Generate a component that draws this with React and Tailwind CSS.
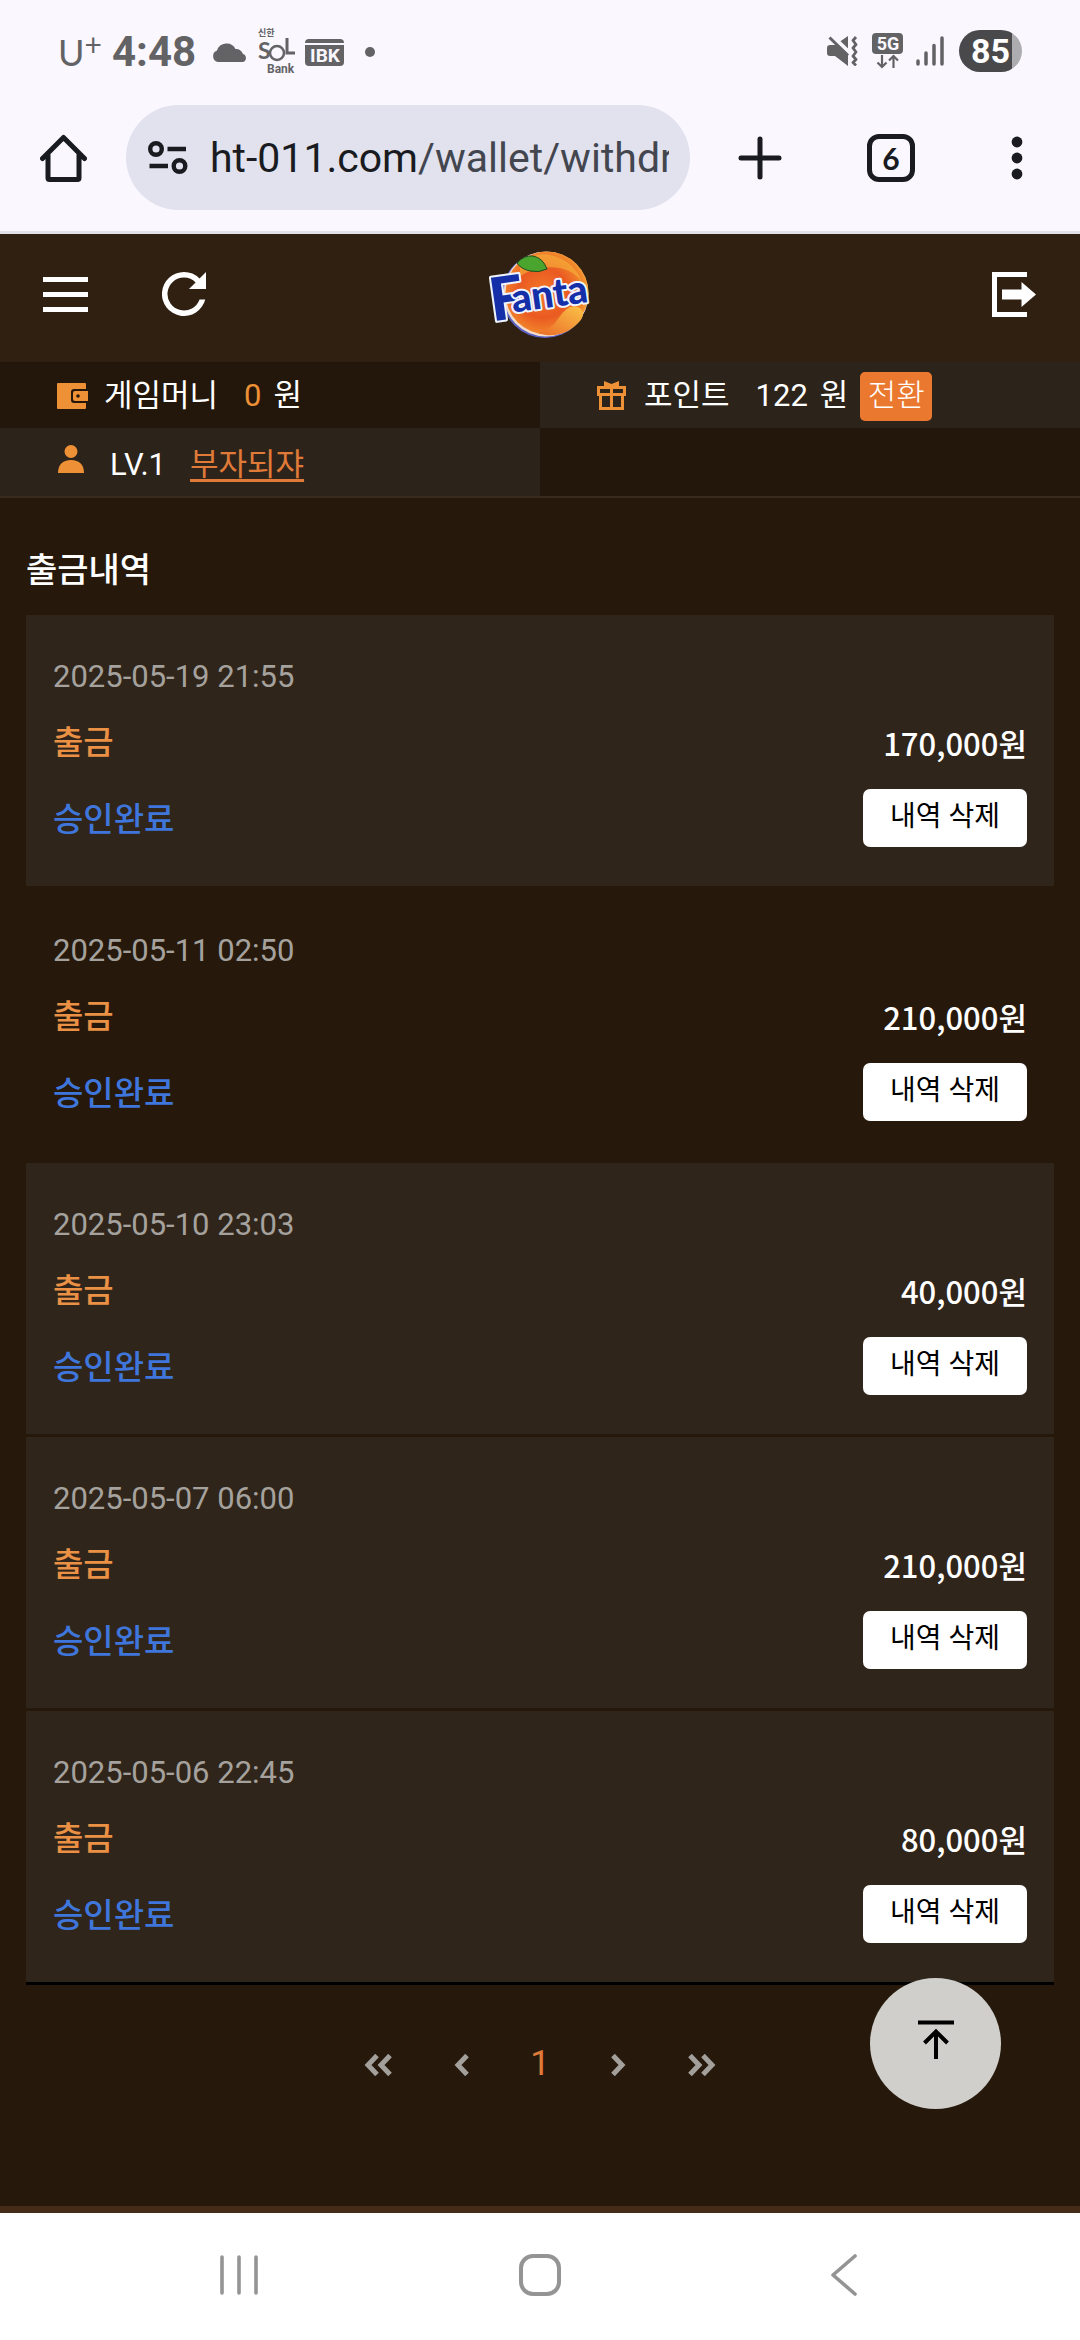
import { useRef, useState } from 'react'
import clsx from 'clsx'

const INITIAL_WITHDRAWALS = [
  { id: 1, date: '2025-05-19 21:55', amount: 170000 },
  { id: 2, date: '2025-05-11 02:50', amount: 210000 },
  { id: 3, date: '2025-05-10 23:03', amount: 40000 },
  { id: 4, date: '2025-05-07 06:00', amount: 210000 },
  { id: 5, date: '2025-05-06 22:45', amount: 80000 },
]

// 상태 표시줄
function StatusBar() {
  return (
    <div className="flex h-[105px] items-start justify-between px-[58px] pt-[30px] text-[#636366]">
      <div className="flex h-11 items-center">
        <div className="flex w-[54px] items-center font-['Lato','Noto_Sans_CJK_KR',sans-serif] text-4xl">
          <span>U</span>
          <span className="mb-4 text-3xl leading-none">+</span>
        </div>
        <span className="w-[100px] font-['Roboto',sans-serif] text-[42px] font-bold leading-none">4:48</span>
        <svg className="mr-2.5 h-5 w-9" viewBox="0 0 36 20" fill="currentColor">
          <path d="M6 20a6 6 0 0 1-1-11.500A10 10 0 0 1 23.500 7 7 7 0 0 1 31 12a4.200 4.200 0 0 1 0 8Z" />
        </svg>
        <svg className="mr-2 h-[52px] w-[39px]" viewBox="0 -4 39 52" fill="currentColor">
          <text x="0" y="6" fontSize="9" fontWeight="700" fontFamily="Noto Sans CJK KR">신한</text>
          <text x="0" y="29" fontSize="23" fontWeight="700" fontFamily="Lato">S</text>
          <circle cx="19" cy="23" r="7" fill="none" stroke="currentColor" strokeWidth="2.500" />
          <path d="M29 8v15h8" fill="none" stroke="currentColor" strokeWidth="3" />
          <text x="9" y="43" fontSize="12" fontWeight="700" fontFamily="Roboto">Bank</text>
        </svg>
        <svg className="h-[27px] w-10" viewBox="0 0 40 27">
          <path d="M0 4a4 4 0 0 1 4-4h31a4 4 0 0 1 4 4Z" fill="currentColor" />
          <path d="M0 6h39v17a4 4 0 0 1-4 4H4a4 4 0 0 1-4-4Z" fill="currentColor" />
          <text x="20" y="23" fontSize="19" fontWeight="700" fontFamily="Roboto" textAnchor="middle" fill="#faf7ff">IBK</text>
        </svg>
        <span className="ml-5 size-2.5 rounded-full bg-current" />
      </div>

      <div className="flex h-[42px] items-center">
        <svg className="mr-3.5 h-[30px] w-[31px]" viewBox="0 0 31 30">
          <path d="M3 9h5L21 0v30L8 20H3a3 3 0 0 1-3-3v-5a3 3 0 0 1 3-3Z" fill="currentColor" />
          <path d="M1 -4L25 19" stroke="#faf7ff" strokeWidth="4" />
          <path d="M2.500 1.500l18.500 18" stroke="currentColor" strokeWidth="3" />
          <path d="M29 1l-3 3.500 3 4-3 3.500 3 4-3 4 3 3.500-3 3 3 3" fill="none" stroke="currentColor" strokeWidth="2.800" strokeLinejoin="round" />
        </svg>
        <svg className="mr-3 h-9 w-8" viewBox="0 0 32 36">
          <rect width="31" height="21" rx="4" fill="currentColor" />
          <text x="16" y="17" fontSize="18" fontWeight="700" fontFamily="Roboto" textAnchor="middle" fill="#faf7ff">5G</text>
          <path d="M10 22v12M5.500 29.500L10 34l4.500-4.500M21.500 35V23M17 27.500l4.500-4.500 4.500 4.500" fill="none" stroke="currentColor" strokeWidth="2.200" />
        </svg>
        <svg className="mr-[15px] h-[30px] w-7" viewBox="0 0 28 30" stroke="currentColor" strokeWidth="3.500" strokeLinecap="round">
          <path d="M2 25v3M10 17v11M18 9.500V28M26 2v26" />
        </svg>
        <div className="flex h-[42px] w-[63px] items-center justify-center rounded-full bg-linear-to-r from-[#49494b] from-84% to-[#adacb0] to-84% font-['Roboto',sans-serif] text-[34px] font-bold text-white">
          85
        </div>
      </div>
    </div>
  )
}

// 브라우저 주소창
function BrowserBar() {
  return (
    <div className="flex h-[105px] items-center text-[#191b20]">
      <a href="#home" aria-label="홈" className="ml-10 mr-[39px]">
        <svg className="h-12 w-[47px]" viewBox="0 0 47 48" fill="none" stroke="currentColor" strokeWidth="5" strokeLinejoin="round" strokeLinecap="round">
          <path d="M8 21v23a1.500 1.500 0 0 0 1.500 1.500h28A1.500 1.500 0 0 0 39 44V21M2.500 24.500L23.500 3.500l21 21" />
        </svg>
      </a>
      <div className="flex h-full min-w-0 flex-1 items-center rounded-full bg-[#e1e2ee] pl-[22px] pr-[21px]">
        <svg className="mr-[22px] h-[34px] w-10 shrink-0" viewBox="0 0 40 34" fill="none" stroke="currentColor" strokeWidth="4.400">
          <circle cx="8" cy="8" r="5.800" />
          <circle cx="31.500" cy="25" r="5.800" />
          <path d="M19.500 8H38M1.500 25h18.500" />
        </svg>
        <div className="flex-1 overflow-hidden whitespace-nowrap font-['Roboto',sans-serif] text-[41px] leading-[56px]">
          ht-011.com<span className="text-[#43464f]">/wallet/withdr</span>
        </div>
      </div>
      <button type="button" aria-label="새 탭" className="ml-12">
        <svg className="size-11" viewBox="0 0 44 44" stroke="currentColor" strokeWidth="5" strokeLinecap="round">
          <path d="M22 3v38M3 22h38" />
        </svg>
      </button>
      <button type="button" className="ml-[85px] flex size-12 items-center justify-center rounded-xl border-5 border-current font-['Lato',sans-serif] text-[30px] font-bold leading-none">
        6
      </button>
      <button type="button" aria-label="메뉴" className="ml-24 mr-[57px]">
        <svg className="h-11 w-3" viewBox="0 0 12 44" fill="currentColor">
          <circle cx="6" cy="6" r="5.400" />
          <circle cx="6" cy="22" r="5.400" />
          <circle cx="6" cy="38" r="5.400" />
        </svg>
      </button>
    </div>
  )
}

function Logo() {
  return (
    <svg className="h-[90px] w-[104px] overflow-visible" viewBox="0 0 104 90">
      <defs>
        <radialGradient id="orange" cx="0.450" cy="0.500" r="0.600">
          <stop offset="0" stopColor="#f47b28" />
          <stop offset="0.500" stopColor="#ea5a22" />
          <stop offset="0.850" stopColor="#f28a2c" />
          <stop offset="1" stopColor="#f9c04a" />
        </radialGradient>
        <linearGradient id="drop" x1="1" y1="0" x2="0" y2="1">
          <stop offset="0" stopColor="#fbc247" />
          <stop offset="1" stopColor="#ea6a28" />
        </linearGradient>
      </defs>
      <circle cx="57" cy="46" r="43" fill="#5a62c8" />
      <circle cx="58" cy="45" r="42.500" fill="#f4dcc8" />
      <circle cx="59" cy="44" r="41.500" fill="url(#orange)" />
      <path d="M32 27q18-11 40-8 14 3 22 14-8-20-28-26T32 17Z" fill="#f6b23c" opacity="0.600" />
      <path d="M50 84q14-4 20-14 10-16 20-12 9 5 2 14-14 16-34 14Z" fill="url(#drop)" />
      <text
        transform="rotate(-8 50 45)"
        x="1"
        y="66"
        fontFamily="Lato"
        fontWeight="900"
        fill="#152fa8"
        stroke="#eef4ff"
        strokeWidth="4"
        strokeLinejoin="round"
        paintOrder="stroke"
      >
        <tspan fontSize="60">F</tspan>
        <tspan dx="-12" dy="-6" fontSize="39">anta</tspan>
      </text>
      <path d="M29 14q7-8 16-7 10 2 14 13-8 4-17 2-9-2-13-8Z" fill="#4aa52f" stroke="#1c4a1e" strokeWidth="1" />
    </svg>
  )
}

function SiteHeader() {
  return (
    <header className="grid h-32 grid-cols-3 items-center bg-[#2f2012] pl-[43px] pr-11 pb-2 text-white">
      <div className="flex items-center gap-[74px]">
        <button type="button" aria-label="메뉴 열기" className="flex w-[45px] flex-col gap-2.5">
          <span className="h-[5px] bg-white" />
          <span className="h-[5px] bg-white" />
          <span className="h-[5px] bg-white" />
        </button>
        <button type="button" aria-label="새로고침">
          <svg className="size-11" viewBox="4 4 16 16" fill="currentColor">
            <path d="M17.650 6.350A7.960 7.960 0 0 0 12 4a8 8 0 1 0 7.730 10h-2.080A6 6 0 1 1 12 6c1.660 0 3.140.690 4.220 1.780L13.800 10.200H20V4Z" />
          </svg>
        </button>
      </div>
      <a href="#main" aria-label="메인" className="justify-self-center">
        <Logo />
      </a>
      <button type="button" aria-label="로그아웃" className="justify-self-end">
        <svg className="h-[45px] w-11" viewBox="0 0 44 45" fill="currentColor">
          <path d="M0 0h35v5H5v35h30v5H0ZM10 17.500h19.500V10L44 22.500 29.500 35v-7.500H10Z" />
        </svg>
      </button>
    </header>
  )
}

function WalletIcon() {
  return (
    <svg className="h-[26px] w-8" viewBox="0 0 32 26">
      <path d="M1 0h27a1 1 0 0 1 1 1v5H17a3 3 0 0 0-3 3v8a3 3 0 0 0 3 3h12v5a1 1 0 0 1-1 1H1a1 1 0 0 1-1-1V1a1 1 0 0 1 1-1Z" fill="#ee9035" />
      <path d="M18 8h13v10H18a2 2 0 0 1-2-2v-6a2 2 0 0 1 2-2Z" fill="#ee9035" />
      <circle cx="21" cy="13" r="1.800" fill="#23170b" />
    </svg>
  )
}

function GiftIcon() {
  return (
    <svg className="h-[30px] w-[29px]" viewBox="0 0 29 30" fill="none" stroke="#ee9035" strokeWidth="3">
      <path d="M1.500 6.500h26v7h-26ZM3.500 13.500v14h22v-14M14.500 6v21" />
      <path d="M7 6V0l7.500 3L22 0v6Z" fill="#ee9035" stroke="none" />
    </svg>
  )
}

function UserIcon() {
  return (
    <svg className="h-7 w-[26px]" viewBox="0 0 26 28" fill="#ee9035">
      <circle cx="13" cy="6.500" r="6.500" />
      <path d="M0 28c0-8 4.500-13 13-13s13 5 13 13Z" />
    </svg>
  )
}

// 게임머니 / 포인트 / 레벨
function UserInfo() {
  return (
    <section className="grid grid-cols-2 border-b-2 border-[#3b2a20] text-[31px] leading-10 text-white">
      <div className="flex h-[66px] items-center bg-[#23170b] pl-[57px] pt-0.5">
        <WalletIcon />
        <span className="ml-[15px]">게임머니</span>
        <span className="ml-[26px] text-[#ee9035]">0</span>
        <span className="ml-3">원</span>
      </div>
      <div className="flex h-[66px] items-center bg-[#2c231a] pl-[57px] pt-0.5">
        <GiftIcon />
        <span className="ml-[18px]">포인트</span>
        <span className="ml-[26px]">122</span>
        <span className="ml-3">원</span>
        <button type="button" className="ml-3 h-[49px] w-[72px] rounded-[5px] bg-[#ea792f] font-light">
          전환
        </button>
      </div>
      <div className="flex h-[68px] items-center bg-[#2c231a] pl-[58px] pt-1.5">
        <span className="mb-3">
          <UserIcon />
        </span>
        <span className="ml-[26px]">LV.1</span>
        <a href="#profile" className="ml-6 text-[#e07a38] underline decoration-3 underline-offset-4">
          부자되쟈
        </a>
      </div>
      <div className="bg-[#23170b]" />
    </section>
  )
}

function WithdrawItem({ item, highlighted, onDelete }) {
  return (
    <li className={clsx('border-b-3 border-[#26190c] px-[27px] pb-[39px] pt-10 last:border-black', highlighted && 'bg-[#30251a]')}>
      <time className="block text-[31px] leading-[44px] text-[#a5a29e]">{item.date}</time>
      <div className="mt-4 flex h-[60px] items-center justify-between pb-1 font-medium">
        <span className="text-[33px] text-[#ea9145]">출금</span>
        <span className="font-['Noto_Sans_CJK_KR',sans-serif] text-[31px] text-white">{item.amount.toLocaleString('en-US')}원</span>
      </div>
      <div className="mt-3.5 flex h-[58px] items-center justify-between">
        <span className="pt-1 text-[33px] font-medium text-[#3f76db]">승인완료</span>
        <button
          type="button"
          onClick={() => onDelete(item.id)}
          className="h-full w-[164px] rounded-[7px] bg-white pb-0.5 text-[28px] leading-10 text-black"
        >
          내역 삭제
        </button>
      </div>
    </li>
  )
}

function Chevron({ double, flip }) {
  return (
    <svg
      className={clsx('h-[22px]', double ? 'w-7' : 'w-[15px]', flip && 'rotate-180')}
      viewBox={double ? '0 0 28 22' : '0 0 15 22'}
      fill="none"
      stroke="#a3a09c"
      strokeWidth="5"
    >
      <path d="M13 1.500L4 11l9 9.500" />
      {double && <path d="M26 1.500L17 11l9 9.500" />}
    </svg>
  )
}

function Pagination() {
  return (
    <nav aria-label="페이지" className="mt-14 flex h-12 items-center justify-center text-[35px] leading-none">
      <button type="button" aria-label="처음"><Chevron double /></button>
      <button type="button" aria-label="이전" className="ml-[62px]"><Chevron /></button>
      <a href="#1" className="mx-[61px] w-5 pb-1 text-center text-[#e07a38]">1</a>
      <button type="button" aria-label="다음"><Chevron flip /></button>
      <button type="button" aria-label="마지막" className="ml-[62px]"><Chevron double flip /></button>
    </nav>
  )
}

function SystemNav() {
  return (
    <nav className="grid h-[127px] grid-cols-[1fr_64px_1fr] items-center bg-white pb-1">
      <button type="button" aria-label="최근 앱" className="ml-[219px] justify-self-start">
        <svg className="h-[42px] w-10" viewBox="0 0 40 42" stroke="#949494" strokeWidth="3.600" strokeLinecap="round">
          <path d="M3 3v36M20 3v36M37 3v36" />
        </svg>
      </button>
      <button type="button" aria-label="홈 화면" className="justify-self-center">
        <svg className="size-[42px]" viewBox="0 0 42 42" fill="none" stroke="#949494" strokeWidth="4">
          <rect x="2" y="2" width="38" height="38" rx="12" />
        </svg>
      </button>
      <button type="button" aria-label="뒤로" className="mr-[222px] justify-self-end">
        <svg className="h-[42px] w-7" viewBox="0 0 28 42" fill="none" stroke="#949494" strokeWidth="3.600" strokeLinecap="round" strokeLinejoin="round">
          <path d="M25 2L3 21l22 19" />
        </svg>
      </button>
    </nav>
  )
}

export default function App() {
  const [withdrawals, setWithdrawals] = useState(INITIAL_WITHDRAWALS)
  const topRef = useRef(null)

  const deleteItem = (id) => {
    setWithdrawals(withdrawals.filter((item) => item.id !== id))
  }

  return (
    <div ref={topRef} className="flex min-h-screen flex-col bg-[#26190c] font-['Roboto','Noto_Sans_CJK_KR',sans-serif]">
      <div className="border-b-3 border-[#e1e1e7] bg-[#faf7ff] pb-[21px]">
        <StatusBar />
        <BrowserBar />
      </div>
      <SiteHeader />
      <UserInfo />

      <main className="relative flex-1 border-b-7 border-[#442c18] px-[26px] pt-12">
        <h1 className="text-[34px] font-medium leading-[48px] text-white">출금내역</h1>
        <ul className="mt-[21px]">
          {withdrawals.map((item) => (
            <WithdrawItem key={item.id} item={item} highlighted={item.id !== 2} onDelete={deleteItem} />
          ))}
        </ul>
        <Pagination />
        <button
          type="button"
          aria-label="맨 위로"
          onClick={() => topRef.current.scrollIntoView({ behavior: 'smooth' })}
          className="absolute bottom-[97px] right-[79px] flex size-[131px] items-center justify-center rounded-full bg-[#d9d9d6]/95 pb-2"
        >
          <svg className="h-10 w-9" viewBox="0 0 36 40" fill="none" stroke="#000" strokeWidth="4">
            <path d="M0 2.500h36M18 39V12M6.500 23L18 11.500 29.500 23" />
          </svg>
        </button>
      </main>

      <SystemNav />
    </div>
  )
}
